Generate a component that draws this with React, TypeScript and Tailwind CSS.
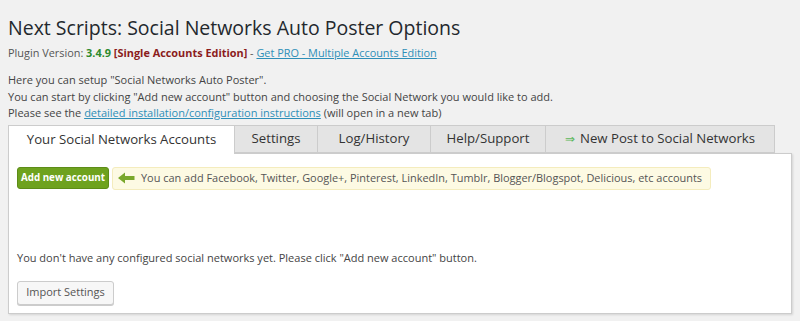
import React from "react";

const font = { fontFamily: '"Open Sans", "Noto Sans", sans-serif' };

function Arrow() {
  return (
    <svg width="17" height="12" viewBox="0 0 17 12" className="shrink-0">
      <path d="M0 6 L7 0.5 L7 4 L16.5 4 L16.5 8 L7 8 L7 11.5 Z" fill="#7aa82c" />
    </svg>
  );
}

export default function App() {
  const tabs = [
    { t: "Settings", w: "w-[83px]" },
    { t: "Log/History", w: "w-[113px]" },
    { t: "Help/Support", w: "w-[115px]" },
  ];
  return (
    <div className="w-[800px] h-[321px] bg-[#f1f1f1] text-[#444] overflow-hidden" style={font}>
      <div className="pl-[8px] pr-[8px] pt-[13px]">
        <h2 className="text-[19.5px] leading-[29px] text-[#23282d] font-normal">
          Next Scripts: Social Networks Auto Poster Options
        </h2>
        <div className="text-[10.9px] leading-[16px] mt-[3px] text-[#555]">
          Plugin Version: <span className="font-bold text-[#2d8a2d]">3.4.9</span>{" "}
          <span className="font-bold text-[#8b1c1c]">[Single Accounts Edition]</span> -{" "}
          <a className="underline text-[#2e8fb8]">Get PRO - Multiple Accounts Edition</a>
        </div>
        <div className="text-[11px] leading-[16.5px] mt-[11px] text-[#444]">
          <div>Here you can setup "Social Networks Auto Poster".</div>
          <div>You can start by clicking "Add new account" button and choosing the Social Network you would like to add.</div>
          <div>
            Please see the{" "}
            <a className="underline text-[#2e8fb8]">detailed installation/configuration instructions</a> (will open in a new tab)
          </div>
        </div>

        <div className="mt-[3px] flex items-start h-[28px] text-[13.2px] text-[#333]">
          <div className="h-[29px] w-[227px] bg-white border border-[#ccc] border-b-0 flex items-center justify-center relative z-10">
            Your Social Networks Accounts
          </div>
          {tabs.map((x) => (
            <div
              key={x.t}
              className={"h-[28px] bg-[#e4e4e4] border border-[#ccc] border-l-0 flex items-center justify-center " + x.w}
            >
              {x.t}
            </div>
          ))}
          <div className="h-[28px] w-[229px] bg-[#e4e4e4] border border-[#ccc] border-l-0 flex items-center justify-center gap-[5px]">
            <span className="text-[#5cb85c] text-[12px]">⇒</span>
            <span>New Post to Social Networks</span>
          </div>
        </div>

        <div className="w-[784px] h-[161px] bg-white border border-[#ccc] shadow-[1px_1px_2px_rgba(0,0,0,0.12)] pl-[8px] pt-[13px]">
          <div className="flex items-center gap-[3px]">
            <div className="h-[22px] w-[92px] rounded-[3px] bg-[#6ea21e] border border-[#5d8c17] text-white text-[9.8px] font-bold flex items-center justify-center">
              Add new account
            </div>
            <div className="h-[23px] pl-[5px] pr-[8px] rounded-[3px] bg-[#fdfae3] border border-[#f4ecbd] flex items-center gap-[6px] text-[10.95px] text-[#555]">
              <Arrow />
              <span>You can add Facebook, Twitter, Google+, Pinterest, LinkedIn, Tumblr, Blogger/Blogspot, Delicious, etc accounts</span>
            </div>
          </div>
          <div className="mt-[60px] text-[11px] leading-[16px] text-[#444]">
            You don't have any configured social networks yet. Please click "Add new account" button.
          </div>
          <div className="mt-[15px] h-[24px] w-[97px] rounded-[3px] bg-[#f7f7f7] border border-[#ccc] shadow-[0_1px_0_#ccc] text-[11px] text-[#555] flex items-center justify-center">
            Import Settings
          </div>
        </div>
      </div>
    </div>
  );
}
